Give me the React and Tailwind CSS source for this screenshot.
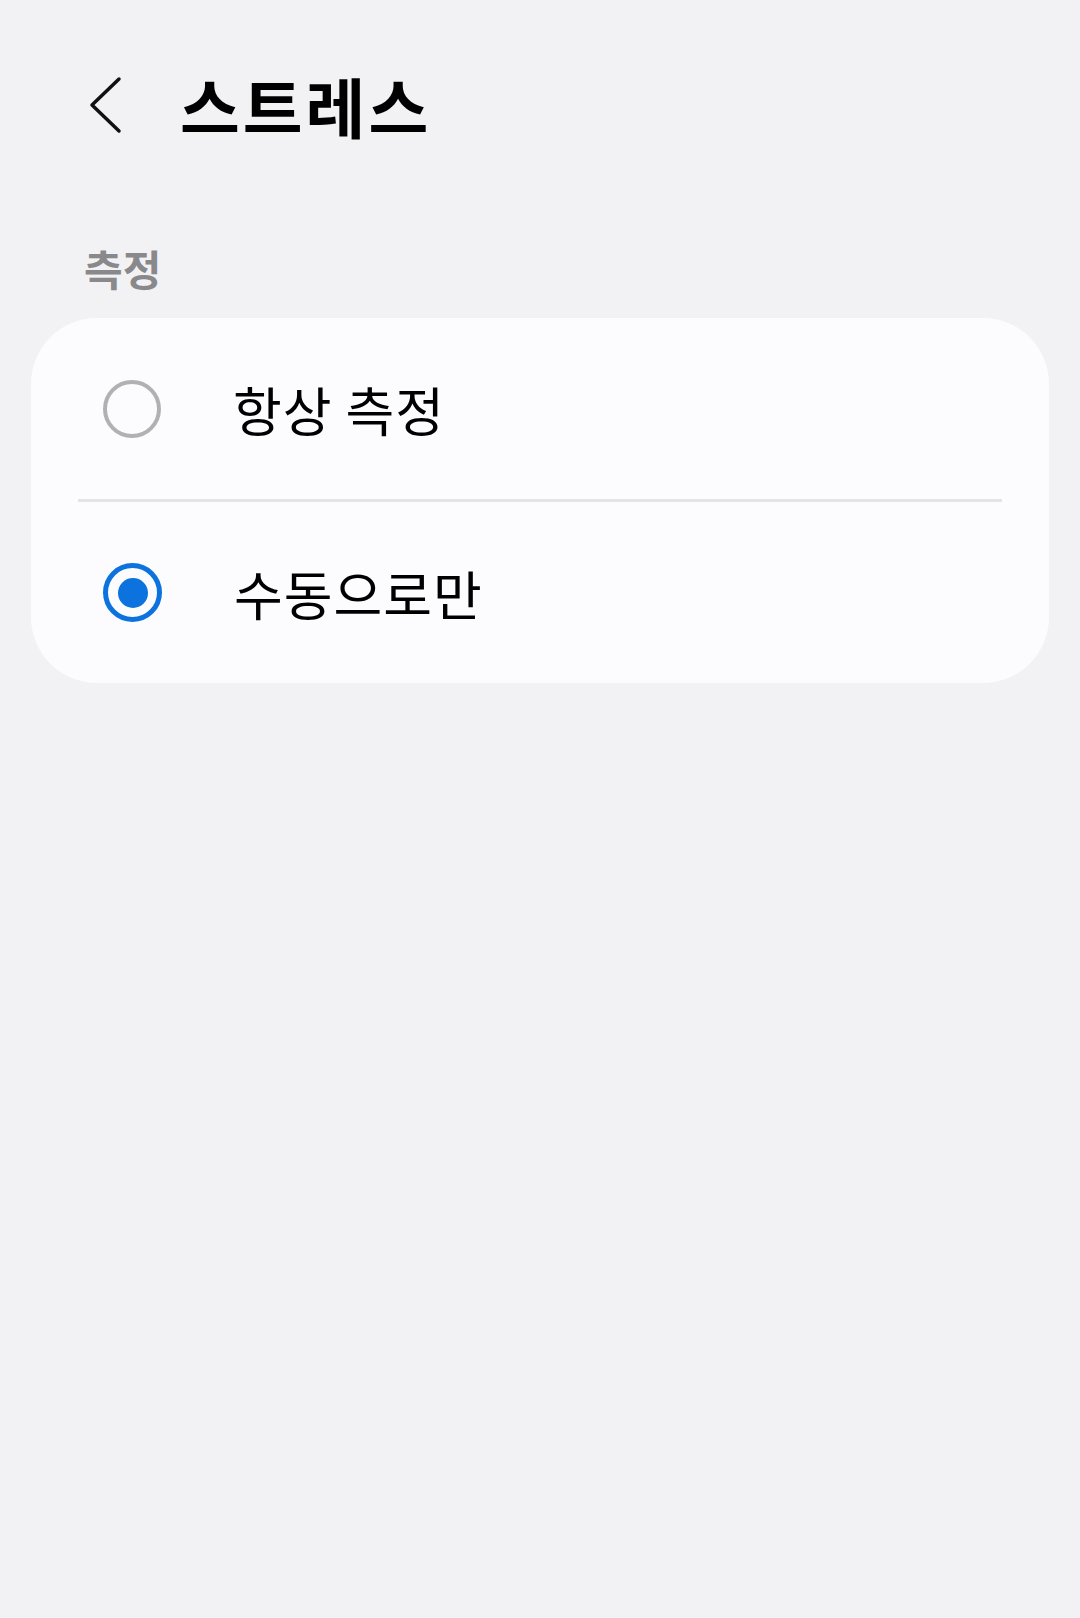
import { useState } from 'react';

const options = [
  { id: 'always', label: '항상 측정' },
  { id: 'manual', label: '수동으로만' },
];

function Radio({ checked }) {
  if (checked) {
    return (
      <div className="w-[59px] h-[59px] rounded-full border-[5px] border-[#0b72de] flex items-center justify-center shrink-0">
        <div className="w-[30px] h-[30px] rounded-full bg-[#0b72de]" />
      </div>
    );
  }
  return <div className="w-[58px] h-[58px] rounded-full border-[4px] border-[#b1b1b4] shrink-0" />;
}

export default function App() {
  const [selected, setSelected] = useState('manual');

  return (
    <div
      className="min-h-screen bg-[#f2f2f4] text-black"
      style={{ fontFamily: '"Noto Sans CJK KR", "Noto Sans", sans-serif' }}
    >
      <header className="flex items-start pt-[75px] pl-[88px]">
        <svg width="34" height="60" viewBox="0 0 34 60" fill="none" className="shrink-0">
          <path d="M31 4 L4 30 L31 56" stroke="#111" strokeWidth="3.5" strokeLinecap="round" strokeLinejoin="round" />
        </svg>
        <h1 className="ml-[58px] -mt-[2px] text-[65px] leading-[65px] font-bold tracking-[3px]">스트레스</h1>
      </header>

      <p className="mt-[105px] pl-[84px] text-[42px] leading-[50px] font-bold text-[#89898c]">측정</p>

      <div className="mt-[25px] mx-[31px] rounded-[66px] bg-[#fcfcfe]">
        {options.map((opt, i) => (
          <div key={opt.id}>
            {i > 0 && <div className="mx-[47px] h-[3px] bg-[#e4e4e6]" />}
            <button
              onClick={() => setSelected(opt.id)}
              className="w-full h-[181px] flex items-center pl-[72px] text-left"
            >
              <Radio checked={selected === opt.id} />
              <span className="ml-[72px] text-[53px] leading-[60px] tracking-[1px]">{opt.label}</span>
            </button>
          </div>
        ))}
      </div>
    </div>
  );
}
